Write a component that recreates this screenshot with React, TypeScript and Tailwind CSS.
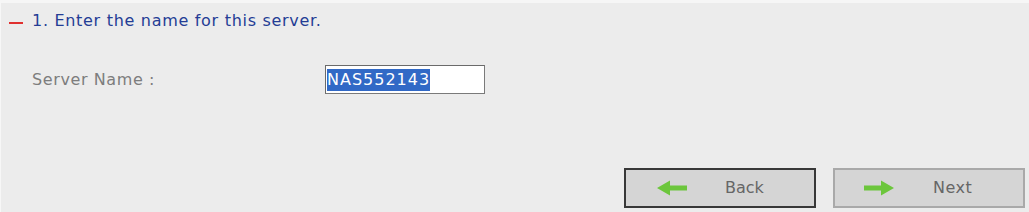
import React from "react";

function Arrow({ dir }: { dir: "left" | "right" }) {
  return (
    <svg width="30" height="16" viewBox="0 0 30 16" className={dir === "right" ? "-scale-x-100" : ""}>
      <path d="M0 8 L13 0.5 L13 5.5 L30 5.5 L30 10.5 L13 10.5 L13 15.5 Z" fill="#6cc63c" />
    </svg>
  );
}

export default function App() {
  return (
    <div
      className="w-[1029px] h-[212px] bg-[#ececec] border-t-[3px] border-t-[#f6f6f6] border-l border-l-[#f7f7f7] flex flex-col"
      style={{ fontFamily: '"DejaVu Sans", Verdana, sans-serif' }}
    >
      <div className="flex items-center h-[20px] mt-[8px]">
        <div className="ml-[8px] w-[14px] h-[2px] bg-[#e0302f] mt-[3px]" />
        <span className="ml-[9px] text-[16px] leading-[20px] tracking-[0.7px] text-[#243d95]">
          1. Enter the name for this server.
        </span>
      </div>
      <div className="flex items-center mt-[34px]">
        <span className="ml-[31px] w-[293px] text-[16px] tracking-[0.6px] text-[#7d7d7d]">Server Name :</span>
        <div className="w-[160px] h-[29px] border border-[#7a7a7a] border-t-[#6a6a6a] border-l-[#6a6a6a] bg-white flex items-center pl-[1px]">
          <span className="bg-[#3169c6] text-white text-[16px] leading-[22px] tracking-[1px]">NAS552143</span>
        </div>
      </div>
      <div className="mt-auto mb-[4px] flex justify-end gap-[17px] pr-[4px]">
        <div className="w-[192px] h-[40px] bg-[#d5d5d5] border-2 border-[#383838] flex items-center pl-[31px]">
          <Arrow dir="left" />
          <span className="ml-[38px] text-[16px] text-[#666]">Back</span>
        </div>
        <div className="w-[192px] h-[40px] bg-[#d5d5d5] border-2 border-[#a9a9a9] flex items-center pl-[29px]">
          <Arrow dir="right" />
          <span className="ml-[39px] text-[16px] tracking-[0.5px] text-[#666]">Next</span>
        </div>
      </div>
    </div>
  );
}
